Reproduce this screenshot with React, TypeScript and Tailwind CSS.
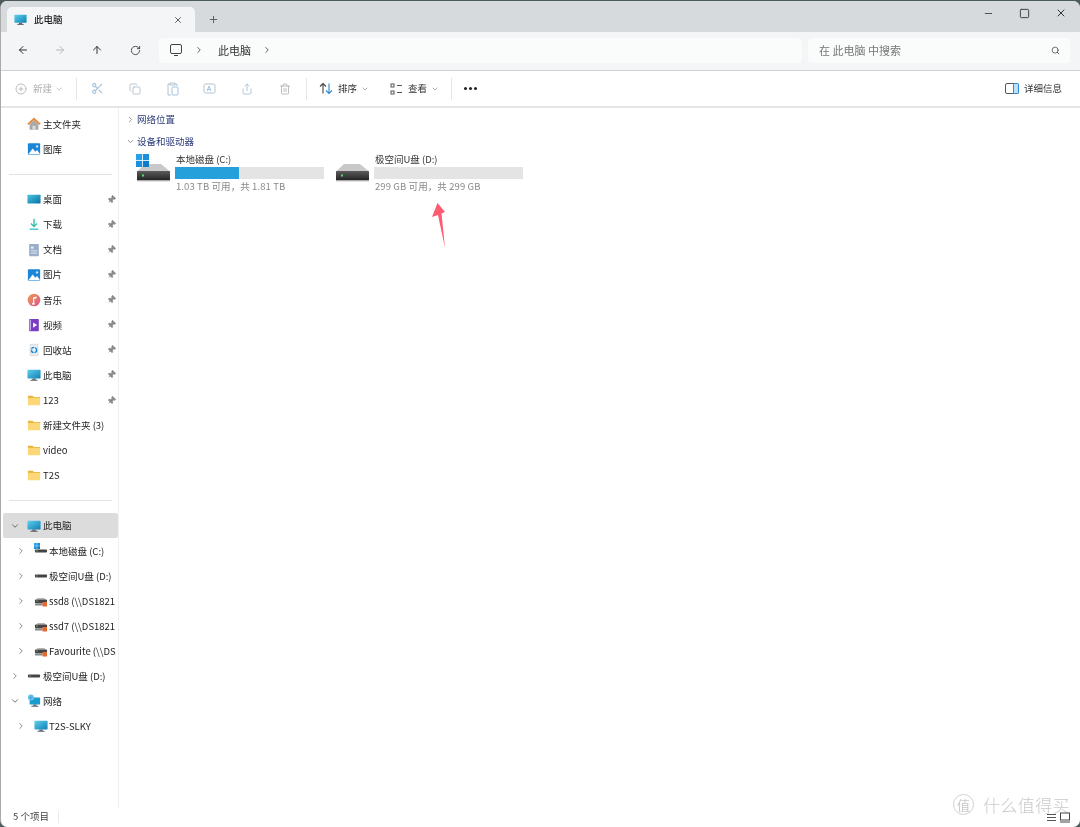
import React from "react";
import { ArrowLeft, ArrowRight, ArrowUp, RotateCw, ChevronRight, ChevronDown, Search, X, Plus, Minus, Square, Scissors, Copy, Share, Trash2, Pin, PlusCircle } from "lucide-react";

const font = { fontFamily: '"Noto Sans CJK SC","Liberation Sans",sans-serif' };

const Monitor = ({ s = 14 }: { s?: number }) => (
  <svg width={s} height={s} viewBox="0 0 16 16">
    <defs><linearGradient id="mon" x1="0" y1="0" x2="1" y2="1"><stop offset="0" stopColor="#5fd0ec" /><stop offset="1" stopColor="#0f7fb5" /></linearGradient></defs>
    <rect x="0.5" y="2" width="15" height="10" rx="0.8" fill="url(#mon)" />
    <rect x="6" y="12" width="4" height="1.6" fill="#5b6b75" />
    <rect x="4" y="13.5" width="8" height="1" fill="#46525a" />
  </svg>
);
const Home = () => (
  <svg width="14" height="14" viewBox="0 0 16 16">
    <path d="M3 8 L8 3.5 L13 8 V14.5 H3 Z" fill="#a9a9a9" />
    <rect x="6.3" y="10" width="3.4" height="4.5" fill="#dcdcdc" />
    <path d="M1 8.5 L8 2 L15 8.5" fill="none" stroke="#e58a3c" strokeWidth="2" />
  </svg>
);
const Picture = () => (
  <svg width="14" height="14" viewBox="0 0 16 16">
    <rect x="1" y="1.5" width="14" height="13" rx="1.2" fill="#1a86d8" />
    <path d="M1.5 14 L6.5 7.5 L9.5 11 L11.5 9 L15 14 Z" fill="#fff" />
    <circle cx="11.5" cy="5" r="1.4" fill="#bfe3fa" />
  </svg>
);
const Desktop = () => (
  <svg width="14" height="14" viewBox="0 0 16 16">
    <defs><linearGradient id="dsk" x1="0" y1="0" x2="1" y2="1"><stop offset="0" stopColor="#46c7dc" /><stop offset="1" stopColor="#0c6fa8" /></linearGradient></defs>
    <rect x="0.5" y="3" width="15" height="10" rx="0.6" fill="url(#dsk)" />
  </svg>
);
const Download = () => (
  <svg width="14" height="14" viewBox="0 0 16 16" fill="none" stroke="#35bfa6" strokeWidth="1.6">
    <path d="M8 2 V10.5 M4.5 7.5 L8 11 L11.5 7.5" />
    <path d="M3 14 H13" stroke="#55c8d8" />
  </svg>
);
const Doc = () => (
  <svg width="14" height="14" viewBox="0 0 16 16">
    <rect x="2.5" y="1" width="11" height="14" rx="0.8" fill="#98aecb" />
    <rect x="4.5" y="4" width="3" height="2.5" fill="#e8eef6" />
    <rect x="4.5" y="8.5" width="7" height="1" fill="#e8eef6" />
    <rect x="4.5" y="11" width="7" height="1" fill="#e8eef6" />
  </svg>
);
const Music = () => (
  <svg width="14" height="14" viewBox="0 0 16 16">
    <defs><linearGradient id="mus" x1="0" y1="0" x2="1" y2="1"><stop offset="0" stopColor="#ef9a4c" /><stop offset="1" stopColor="#d9568e" /></linearGradient></defs>
    <circle cx="8" cy="8" r="7.2" fill="url(#mus)" />
    <path d="M7 11 V5 L11 4 V6 L8.2 6.8 V11.2 A1.5 1.3 0 1 1 7 11" fill="#fff" />
  </svg>
);
const Video = () => (
  <svg width="14" height="14" viewBox="0 0 16 16">
    <rect x="2.5" y="1" width="11" height="14" rx="0.8" fill="#7a3dc2" />
    <rect x="3.2" y="2" width="1.4" height="12" fill="#c8aaf0" />
    <path d="M7 5 L11.5 8 L7 11 Z" fill="#fff" />
  </svg>
);
const Recycle = () => (
  <svg width="14" height="14" viewBox="0 0 16 16">
    <path d="M3.5 1.5 H12.5 V14.5 H3.5 Z" fill="#eceff1" stroke="#c8ccd0" strokeWidth="0.7" />
    <circle cx="8" cy="8" r="3" fill="none" stroke="#1a8ad8" strokeWidth="1.6" strokeDasharray="4 1" />
  </svg>
);
const Folder = () => (
  <svg width="14" height="14" viewBox="0 0 16 16">
    <path d="M1 3 H6.5 L8 4.5 H15 V6 H1 Z" fill="#e6b23a" />
    <rect x="1" y="5.5" width="14" height="8.5" rx="0.6" fill="#fcd777" />
  </svg>
);
const WinLogo = ({ s = 13 }: { s?: number }) => (
  <svg width={s} height={s} viewBox="0 0 13 13">
    <rect x="0" y="0" width="6.1" height="6.1" fill="#27a0e6" />
    <rect x="6.9" y="0" width="6.1" height="6.1" fill="#1b8fdc" />
    <rect x="0" y="6.9" width="6.1" height="6.1" fill="#1b8fdc" />
    <rect x="6.9" y="6.9" width="6.1" height="6.1" fill="#0f7cca" />
  </svg>
);
const SmallDrive = ({ net }: { net?: boolean }) => (
  <svg width="14" height="14" viewBox="0 0 14 14">
    {net && <path d="M2.5 5.5 L3.5 4 H10.5 L11.5 5.5 Z" fill="#b5b5b5" />}
    <rect x="1" y={net ? 5.5 : 5.5} width="12" height={net ? 4 : 3} rx="0.8" fill="#444" />
    <rect x="2.5" y="6.5" width="1" height="1" fill="#8fe08f" />
    {net && <rect x="8.5" y="8" width="4.5" height="4.5" fill="#e9682e" />}
    {net && <rect x="1" y="10" width="7.5" height="1.5" fill="#888" />}
  </svg>
);
const CDrive = () => (
  <div className="relative w-[14px] h-[14px]">
    <SmallDrive />
    <div className="absolute left-0 -top-[1px]"><WinLogo s={6} /></div>
  </div>
);
const Network = () => (
  <svg width="14" height="14" viewBox="0 0 16 16">
    <rect x="3" y="4" width="12" height="8" rx="0.5" fill="#1b9ccf" />
    <rect x="7" y="12" width="4" height="1.5" fill="#5b6b75" />
    <rect x="5" y="13.5" width="8" height="1" fill="#46525a" />
    <circle cx="4.5" cy="4" r="3.5" fill="#6cc5ee" />
    <path d="M2 4 H7 M4.5 1 V7" stroke="#2c8fcf" strokeWidth="0.6" />
  </svg>
);
const BigDrive = () => (
  <svg width="35" height="30" viewBox="0 0 35 30">
    <defs><linearGradient id="hdd" x1="0" y1="0" x2="0" y2="1"><stop offset="0" stopColor="#5c5c5c" /><stop offset="1" stopColor="#222" /></linearGradient></defs>
    <path d="M9 10 H25 L33.5 17 H1.5 Z" fill="#c9c9c9" />
    <rect x="1" y="17" width="33" height="9.5" rx="0.6" fill="url(#hdd)" />
    <rect x="1" y="26.5" width="33" height="1" fill="#c8c8c8" />
    <rect x="6" y="20.5" width="2" height="2" fill="#4fe04f" />
  </svg>
);

const Row = ({ icon, label, pin, chev, open, level = 0, selected }: { icon: React.ReactNode; label: string; pin?: boolean; chev?: boolean; open?: boolean; level?: number; selected?: boolean }) => (
  <div className={`h-[25.1px] flex items-center text-[9.5px] text-[#222] whitespace-nowrap overflow-hidden ${selected ? "bg-[#dcdcdc] rounded-[2px]" : ""}`}>
    <div className={`${level ? "w-[31px] pr-[8px]" : "w-[24px] pr-[7px]"} flex justify-end shrink-0`}>
      {chev && (open ? <ChevronDown size={10} className="text-[#555]" /> : <ChevronRight size={10} className="text-[#777]" />)}
    </div>
    <div className={`${level ? "w-[15px]" : "w-[16px]"} shrink-0 flex`}>{icon}</div>
    <span className="flex-1">{label}</span>
    {pin && <Pin size={9} className="text-[#8a8a8a] fill-[#8a8a8a] mr-[2px] ml-auto rotate-45 shrink-0" />}
  </div>
);
const Sep = () => <div className="h-[25.1px] flex items-center pl-[6px] pr-[6px]"><div className="h-[1px] w-full bg-[#e2e2e2]" /></div>;

const ToolIcon = ({ w, children }: { w: number; children: React.ReactNode }) => (
  <div className="flex justify-center items-center shrink-0" style={{ width: w }}>{children}</div>
);
const VLine = () => <div className="w-[1px] h-[22px] bg-[#e6e6e6] shrink-0" />;

const Tile = ({ icon, name, used, info }: { icon: React.ReactNode; name: string; used: number; info: string }) => (
  <div className="w-[199px] flex shrink-0">
    <div className="w-[39px] pt-[1px] shrink-0 relative">{icon}</div>
    <div className="w-[149px] text-[9.5px] leading-[13px]">
      <div className="text-[#333] pl-[1px] h-[13px]">{name}</div>
      <div className="h-[12px] bg-[#e4e4e4] my-[1px]"><div className="h-full bg-[#26a0da]" style={{ width: `${used}%` }} /></div>
      <div className="text-[#8a8a8a] pl-[1px] tracking-[0.1px]">{info}</div>
    </div>
  </div>
);

export default function App() {
  return (
    <div style={font} className="w-[1080px] h-[827px] bg-[#4d5a5c] overflow-hidden relative blur-[0.35px]">
      <div className="w-[1080px] h-[826px] mt-[1px] bg-white rounded-[7px] overflow-hidden flex flex-col border-l border-[#aaa]">
        {/* Tab bar */}
        <div className="h-[31px] bg-[#d6dadc] flex items-end pl-[6px] shrink-0">
          <div className="w-[188px] h-[25px] bg-[#f3f5f7] rounded-t-[5px] flex items-center pl-[7px] pr-[12px]">
            <Monitor s={13} />
            <span className="text-[9.5px] text-[#222] ml-[7px] flex-1 font-medium">此电脑</span>
            <X size={10} className="text-[#444]" />
          </div>
          <div className="w-[36px] h-[25px] flex items-center justify-center"><Plus size={11} className="text-[#555]" /></div>
          <div className="flex-1 h-[31px] pb-[7px] flex items-center justify-end">
            <Minus size={11} className="text-[#444] mr-[25px]" />
            <Square size={11} strokeWidth={2} className="text-[#333] mr-[25.5px]" />
            <X size={12} className="text-[#333] mr-[13px]" />
          </div>
        </div>
        {/* Address row */}
        <div className="h-[39px] bg-[#f3f5f7] border-b border-[#d0d0d0] flex items-center shrink-0 pb-[2px]">
          <ToolIcon w={43}><ArrowLeft size={12} className="text-[#333]" /></ToolIcon>
          <ToolIcon w={32}><ArrowRight size={12} className="text-[#b8b8b8]" /></ToolIcon>
          <ToolIcon w={42}><ArrowUp size={12} className="text-[#333]" /></ToolIcon>
          <ToolIcon w={34}><RotateCw size={11} className="text-[#444]" /></ToolIcon>
          <div className="w-[643px] ml-[7px] h-[25px] bg-[#fafbfb] rounded-[4px] flex items-center pl-[10px] text-[11px] text-[#333]">
            <svg width="14" height="14" viewBox="0 0 14 14" fill="none" stroke="#444" strokeWidth="1"><rect x="1.5" y="1.5" width="11" height="9" rx="1.5" /><path d="M5 12.5 H9" /></svg>
            <ChevronRight size={10} className="ml-[11px] text-[#444]" />
            <span className="ml-[14px]">此电脑</span>
            <ChevronRight size={10} className="ml-[11px] text-[#444]" />
          </div>
          <div className="w-[262px] ml-[6px] h-[25px] bg-[#fafbfb] rounded-[4px] flex items-center pl-[11px] pr-[10px] text-[11px] text-[#777]">
            <span className="flex-1">在 此电脑 中搜索</span>
            <Search size={9} className="text-[#444]" />
          </div>
        </div>
        {/* Toolbar */}
        <div className="h-[37px] border-b-2 border-[#e3e5e6] flex items-center shrink-0 text-[9.5px] text-[#333]">
          <div className="w-[75px] flex items-center pl-[14px] text-[#b0b0b0]">
            <PlusCircle size={12} className="text-[#bcbcbc]" />
            <span className="ml-[6px]">新建</span>
            <ChevronDown size={8} className="ml-[3px]" />
          </div>
          <VLine />
          <div className="flex items-center pl-[1px]">
            <ToolIcon w={38}><Scissors size={13} className="text-[#9fc0dc]" /></ToolIcon>
            <ToolIcon w={37}><Copy size={12} className="text-[#b8c8d4]" /></ToolIcon>
            <ToolIcon w={38}><svg width="13" height="14" viewBox="0 0 13 14" fill="none" stroke="#b5c2cc" strokeWidth="1"><path d="M4 2 H2 V13 H5 M9 2 H11 V4 M4 1 H9 V3 H4 Z" /><rect x="6" y="5" width="6" height="8" rx="1" stroke="#9fc4e2" /></svg></ToolIcon>
            <ToolIcon w={37}><svg width="13" height="13" viewBox="0 0 13 13" fill="none" stroke="#b5c2cc" strokeWidth="1"><rect x="1" y="2" width="11" height="9" rx="1.5" /><path d="M4 9 L6 4 L8 9 M4.7 7.5 H7.3" stroke="#9fc4e2" /></svg></ToolIcon>
            <ToolIcon w={38}><Share size={12} className="text-[#b5c8d8]" /></ToolIcon>
            <ToolIcon w={37}><Trash2 size={12} className="text-[#bcbcbc]" /></ToolIcon>
          </div>
          <div className="w-[3px]" />
          <VLine />
          <div className="flex items-center pl-[12px]">
            <svg width="14" height="13" viewBox="0 0 14 13" fill="none" strokeWidth="1.1"><path d="M4 11.5 V1.5 M1 4.5 L4 1.5 L7 4.5" stroke="#444" /><path d="M10 1.5 V11.5 M7 8.5 L10 11.5 L13 8.5" stroke="#2a8ad6" /></svg>
            <span className="ml-[5px] w-[20px]">排序</span>
            <ChevronDown size={8} className="ml-[3px] text-[#888]" />
          </div>
          <div className="flex items-center pl-[21px]">
            <svg width="13" height="12" viewBox="0 0 13 12" fill="none" stroke="#555" strokeWidth="1"><rect x="1" y="1" width="3" height="3" /><rect x="1" y="8" width="3" height="3" /><path d="M7 2.5 H12 M7 9.5 H12" /></svg>
            <span className="ml-[5px] w-[20px]">查看</span>
            <ChevronDown size={8} className="ml-[3px] text-[#888]" />
          </div>
          <div className="w-[1px] h-[22px] bg-[#e6e6e6] ml-[12px] shrink-0" />
          <div className="pl-[12px] flex gap-[2.5px]">
            <span className="w-[2.5px] h-[2.5px] rounded-full bg-[#222]" />
            <span className="w-[2.5px] h-[2.5px] rounded-full bg-[#222]" />
            <span className="w-[2.5px] h-[2.5px] rounded-full bg-[#222]" />
          </div>
          <div className="ml-auto flex items-center pr-[18px]">
            <svg width="14" height="11" viewBox="0 0 14 11" fill="none"><rect x="0.5" y="0.5" width="13" height="10" rx="1.5" stroke="#555" /><rect x="8.5" y="0.5" width="5" height="10" rx="1" fill="#bfe0f5" stroke="#2a8ad6" /></svg>
            <span className="ml-[5px]">详细信息</span>
          </div>
        </div>
        {/* Body */}
        <div className="flex-1 flex min-h-0">
          <div className="w-[118px] shrink-0 border-r border-[#f0f0f0] pt-[3.5px] pl-[2px]">
            <Row icon={<Home />} label="主文件夹" />
            <Row icon={<Picture />} label="图库" />
            <Sep />
            <Row icon={<Desktop />} label="桌面" pin />
            <Row icon={<Download />} label="下载" pin />
            <Row icon={<Doc />} label="文档" pin />
            <Row icon={<Picture />} label="图片" pin />
            <Row icon={<Music />} label="音乐" pin />
            <Row icon={<Video />} label="视频" pin />
            <Row icon={<Recycle />} label="回收站" pin />
            <Row icon={<Monitor />} label="此电脑" pin />
            <Row icon={<Folder />} label="123" pin />
            <Row icon={<Folder />} label="新建文件夹 (3)" />
            <Row icon={<Folder />} label="video" />
            <Row icon={<Folder />} label="T2S" />
            <Sep />
            <Row icon={<Monitor />} label="此电脑" chev open selected />
            <Row icon={<CDrive />} label="本地磁盘 (C:)" chev level={1} />
            <Row icon={<SmallDrive />} label="极空间U盘 (D:)" chev level={1} />
            <Row icon={<SmallDrive net />} label="ssd8 (\\DS1821" chev level={1} />
            <Row icon={<SmallDrive net />} label="ssd7 (\\DS1821" chev level={1} />
            <Row icon={<SmallDrive net />} label="Favourite (\\DS" chev level={1} />
            <Row icon={<SmallDrive />} label="极空间U盘 (D:)" chev />
            <Row icon={<Network />} label="网络" chev open />
            <Row icon={<Monitor />} label="T2S-SLKY" chev level={1} />
          </div>
          <div className="flex-1 pl-[7px] pt-[4px] text-[9.5px] text-[#2b3a78]">
            <div className="flex items-center h-[14px]">
              <ChevronRight size={9} className="text-[#777]" />
              <span className="ml-[2px]">网络位置</span>
            </div>
            <div className="flex items-center h-[14px] mt-[8px]">
              <ChevronDown size={9} className="text-[#777]" />
              <span className="ml-[2px]">设备和驱动器</span>
            </div>
            <div className="flex pl-[10px] mt-[5px]">
              <Tile icon={<><BigDrive /><div className="absolute left-0 top-[1px]"><WinLogo /></div></>} name="本地磁盘 (C:)" used={43} info="1.03 TB 可用，共 1.81 TB" />
              <Tile icon={<BigDrive />} name="极空间U盘 (D:)" used={0} info="299 GB 可用，共 299 GB" />
            </div>
          </div>
        </div>
        {/* Status */}
        <div className="h-[19px] shrink-0 flex items-center pl-[12px] text-[9.5px] text-[#444] pb-[2px]">
          <span>5 个项目</span>
          <div className="w-[1px] h-[12px] bg-[#eaeaea] ml-[9px]" />
        </div>
      </div>
      {/* Annotation arrow */}
      <svg className="absolute left-[425px] top-[198px]" width="28" height="54" viewBox="425 198 28 54">
        <path d="M437.5 203 L445 212 L441.5 213.5 L445 248 L438 215 L432 217 Z" fill="#ff5a70" />
      </svg>
      {/* Watermark */}
      <div className="absolute left-[953px] top-[794px] flex items-center text-[#c9c9c9]">
        <div className="w-[21px] h-[21px] rounded-full border border-[#d0d0d0] flex items-center justify-center text-[13px]">值</div>
        <span className="ml-[9px] text-[17px] leading-[20px] tracking-[0.4px] font-light">什么值得买</span>
      </div>
      {/* View switchers */}
      <div className="absolute left-[1046px] top-[812px] flex gap-[2px] items-center">
        <svg width="11" height="10" viewBox="0 0 11 10" stroke="#555" strokeWidth="1"><path d="M1 1.5 H10 M1 4.5 H10 M1 7.5 H10" /></svg>
        <svg width="12" height="11" viewBox="0 0 12 11" fill="none" stroke="#444" strokeWidth="1"><rect x="1.5" y="1" width="9" height="7" /><path d="M1 10 H11" /></svg>
      </div>
    </div>
  );
}
